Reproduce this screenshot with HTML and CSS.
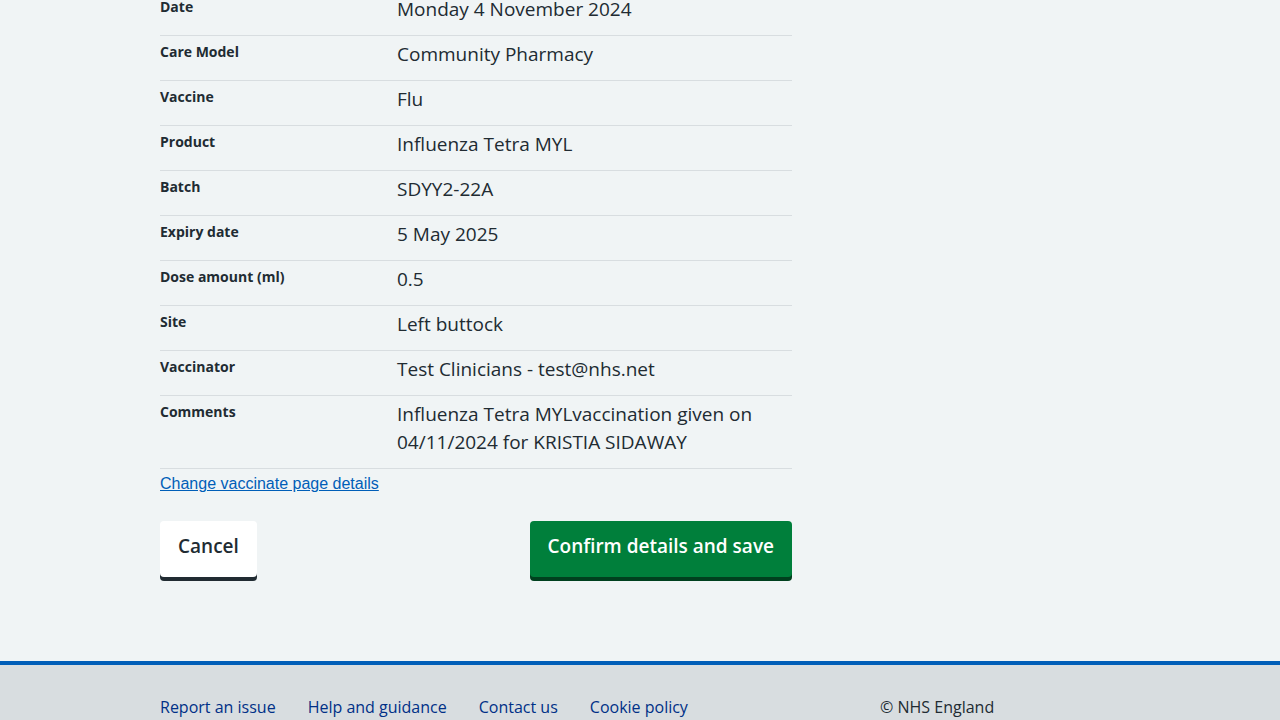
FILE: index.html
```html
<!DOCTYPE html>
<html lang="en">
<head>
<meta charset="utf-8">
<title>Confirm vaccination details</title>
<link rel="stylesheet" href="styles.css">
</head>
<body>
<main class="container">
<div class="column">
<dl class="summary">
<div class="row"><dt>Date</dt><dd>Monday 4 November 2024</dd></div>
<div class="row"><dt>Care Model</dt><dd>Community Pharmacy</dd></div>
<div class="row"><dt>Vaccine</dt><dd>Flu</dd></div>
<div class="row"><dt>Product</dt><dd>Influenza Tetra MYL</dd></div>
<div class="row"><dt>Batch</dt><dd>SDYY2-22A</dd></div>
<div class="row"><dt>Expiry date</dt><dd>5 May 2025</dd></div>
<div class="row"><dt>Dose amount (ml)</dt><dd>0.5</dd></div>
<div class="row"><dt>Site</dt><dd>Left buttock</dd></div>
<div class="row"><dt>Vaccinator</dt><dd>Test Clinicians - test@nhs.net</dd></div>
<div class="row"><dt>Comments</dt><dd>Influenza Tetra MYLvaccination given on 04/11/2024 for KRISTIA SIDAWAY</dd></div>
</dl>
<a class="change" href="#">Change vaccinate page details</a>
<div class="actions">
<button class="button button-cancel" type="button">Cancel</button>
<button class="button button-save" type="submit">Confirm details and save</button>
</div>
</div>
</main>
<footer class="footer">
<div class="container footer-inner">
<ul class="footer-links">
<li><a href="#">Report an issue</a></li>
<li><a href="#">Help and guidance</a></li>
<li><a href="#">Contact us</a></li>
<li><a href="#">Cookie policy</a></li>
</ul>
<p class="copyright">© NHS England</p>
</div>
</footer>
</body>
</html>
```
FILE: styles.css
```css
* { box-sizing: border-box; }
html { overflow-x: hidden; scrollbar-width: none; }
body {
  margin: 0;
  background: #f0f4f5;
  color: #212b32;
  font-family: "Frutiger W01", "Open Sans", "Noto Sans", sans-serif;
  font-variant-ligatures: none;
}
.container { max-width: 960px; margin: 0 auto; }
.column { max-width: 632px; }
.summary { margin: -9px 0 0; }
.row {
  display: grid;
  grid-template-columns: 3fr 5fr;
  border-bottom: 1px solid #d8dde0;
  padding: 4px 0 12px;
}
.row dt { font-size: 14px; font-weight: 700; line-height: 24px; }
.row dd { margin: 0; font-size: 19px; line-height: 28px; }
.change {
  display: block;
  width: fit-content;
  margin-top: 6px;
  color: #005eb8;
  font-family: "Liberation Sans", Arial, sans-serif;
  font-size: 16px;
  line-height: 18px;
}
.actions { display: flex; justify-content: space-between; margin-top: 28px; }
.button {
  border: 0;
  border-radius: 4px;
  padding: 11px 18px 17px;
  font-family: inherit;
  font-size: 19px;
  font-weight: 600;
  line-height: 28px;
}
.button-cancel { background: #fff; color: #212b32; box-shadow: 0 4px 0 #212b32; }
.button-save { background: #007f3b; color: #fff; box-shadow: 0 4px 0 #00401e; }
.footer {
  margin-top: 84px;
  background: #d8dde0;
  border-top: 4px solid #005eb8;
  padding: 30px 0;
}
.footer-inner { display: flex; justify-content: space-between; }
.footer-links { display: flex; gap: 32px; margin: 0; padding: 0; list-style: none; }
.footer-links a { color: #003087; text-decoration: none; }
.footer-links a, .copyright { font-size: 16px; line-height: 24px; }
.copyright { width: 240px; margin: 0; }
```
